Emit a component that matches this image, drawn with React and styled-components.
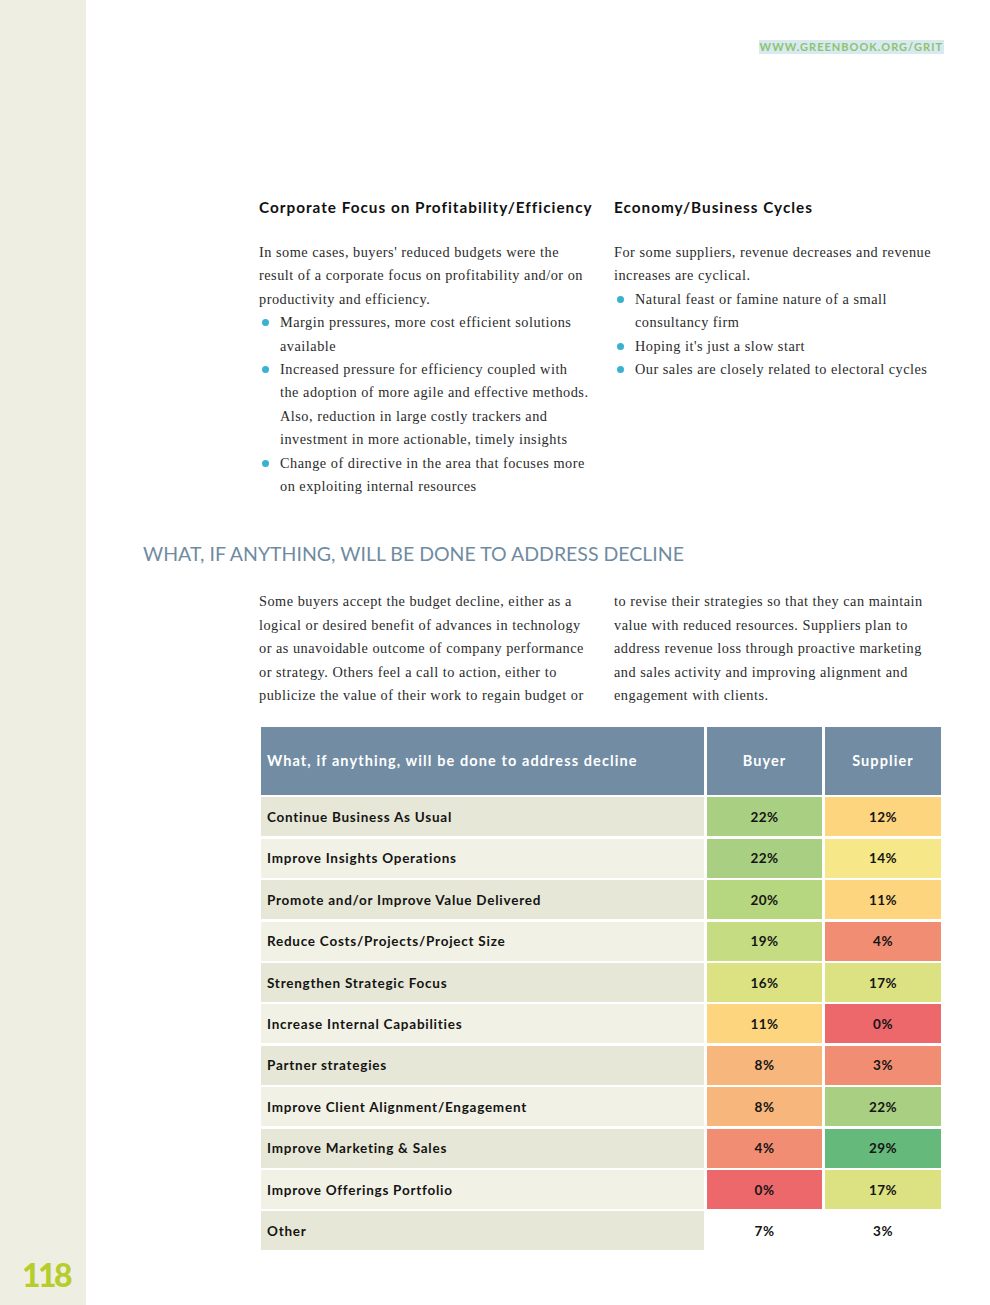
import React from "react";
import styled, { createGlobalStyle } from "styled-components";

const Global = createGlobalStyle`
  html, body { margin: 0; padding: 0; background: #ffffff; }
  body { font-family: "Liberation Serif", serif; }
  * { box-sizing: border-box; }
`;

const Page = styled.div`
  display: flex;
  min-height: 1305px;
  width: 990px;
`;

const Sidebar = styled.aside`
  width: 86px;
  flex: 0 0 86px;
  background: #eeefe2;
  display: flex;
  flex-direction: column;
  justify-content: flex-end;
  align-items: center;
  padding-bottom: 12px;
`;

const PageNumber = styled.div`
  font-family: Lato, "Liberation Sans", sans-serif;
  font-weight: 900;
  font-size: 32px;
  line-height: 36px;
  letter-spacing: -2.5px;
  color: #b7cd2b;
  margin-left: 6px;
`;

const Main = styled.main`
  flex: 1;
  display: flex;
  flex-direction: column;
  padding: 40px 46px 0 0;
`;

const UrlRow = styled.div`
  display: flex;
  justify-content: flex-end;
`;

const Url = styled.span`
  font-family: Lato, "Liberation Sans", sans-serif;
  font-size: 11px;
  line-height: 14px;
  letter-spacing: 1px;
  font-weight: 700;
  color: #8cc46c;
  background: #d9e9f1;
  padding: 0 1px;
`;

const TwoCols = styled.div`
  display: grid;
  grid-template-columns: 335px 330px;
  column-gap: 20px;
  margin-left: 173px;
  margin-top: ${(p) => p.$top || 0}px;
`;

const ColHeading = styled.h3`
  margin: 0 0 24px;
  font-family: Lato, "Liberation Sans", sans-serif;
  font-weight: 700;
  font-size: 15.3px;
  line-height: 20px;
  letter-spacing: 1px;
  color: #111;
  white-space: nowrap;
`;

const Body = styled.p`
  margin: 0;
  font-family: "Liberation Serif", serif;
  font-size: 14.3px;
  line-height: 23.4px;
  letter-spacing: 0.5px;
  color: #2b2b2b;
  white-space: nowrap;
`;

const List = styled.ul`
  list-style: none;
  margin: 0;
  padding: 0;
`;

const Item = styled.li`
  display: flex;
  align-items: flex-start;
  font-family: "Liberation Serif", serif;
  font-size: 14.3px;
  line-height: 23.4px;
  letter-spacing: 0.5px;
  color: #2b2b2b;
  white-space: nowrap;
`;

const Dot = styled.span`
  flex: 0 0 7px;
  width: 7px;
  height: 7px;
  border-radius: 50%;
  background: #38b2cf;
  margin: 8px 11px 0 3px;
`;

const SectionTitle = styled.h2`
  margin: 44px 0 0 57px;
  font-family: Lato, "Liberation Sans", sans-serif;
  font-weight: 400;
  font-size: 19.5px;
  line-height: 24px;
  letter-spacing: 0;
  color: #6f8ba1;
  text-transform: uppercase;
`;

const Table = styled.div`
  margin: 19px 0 0 175px;
  width: 680px;
  display: grid;
  grid-template-columns: 443px 115px 116px;
  column-gap: 3px;
  row-gap: 2.4px;
`;

const HeadCell = styled.div`
  background: #718ca3;
  height: 68px;
  margin-bottom: 0.6px;
  display: flex;
  align-items: center;
  justify-content: ${(p) => (p.$left ? "flex-start" : "center")};
  padding-left: ${(p) => (p.$left ? "6px" : "0")};
  font-family: Lato, "Liberation Sans", sans-serif;
  font-weight: 700;
  font-size: 14.5px;
  letter-spacing: 1.1px;
  color: #ffffff;
`;

const LabelCell = styled.div`
  height: 39px;
  background: ${(p) => (p.$alt ? "#f1f1e6" : "#e6e7d6")};
  display: flex;
  align-items: center;
  padding-left: 6px;
  font-family: Lato, "Liberation Sans", sans-serif;
  font-weight: 700;
  font-size: 13.5px;
  letter-spacing: 0.75px;
  color: #141414;
`;

const ValueCell = styled.div`
  height: 39px;
  background: ${(p) => p.$bg};
  display: flex;
  align-items: center;
  justify-content: center;
  font-family: Lato, "Liberation Sans", sans-serif;
  font-weight: 700;
  font-size: 13.5px;
  letter-spacing: 0.5px;
  color: #141414;
`;

const C = {
  g1: "#a9cf82",
  g2: "#b6d67f",
  g3: "#c5dc82",
  y1: "#dce281",
  y2: "#f6e888",
  o1: "#fdd57f",
  o2: "#f6b67c",
  r1: "#f08d72",
  r2: "#ec686b",
  dg: "#65b97a",
  w: "#ffffff",
};

const rows = [
  ["Continue Business As Usual", "22%", C.g1, "12%", C.o1],
  ["Improve Insights Operations", "22%", C.g1, "14%", C.y2],
  ["Promote and/or Improve Value Delivered", "20%", C.g2, "11%", C.o1],
  ["Reduce Costs/Projects/Project Size", "19%", C.g3, "4%", C.r1],
  ["Strengthen Strategic Focus", "16%", C.y1, "17%", C.y1],
  ["Increase Internal Capabilities", "11%", C.o1, "0%", C.r2],
  ["Partner strategies", "8%", C.o2, "3%", C.r1],
  ["Improve Client Alignment/Engagement", "8%", C.o2, "22%", C.g1],
  ["Improve Marketing & Sales", "4%", C.r1, "29%", C.dg],
  ["Improve Offerings Portfolio", "0%", C.r2, "17%", C.y1],
  ["Other", "7%", C.w, "3%", C.w],
];

export default function App() {
  return (
    <>
      <Global />
      <Page>
        <Sidebar>
          <PageNumber>118</PageNumber>
        </Sidebar>
        <Main>
          <UrlRow>
            <Url>WWW.GREENBOOK.ORG/GRIT</Url>
          </UrlRow>

          <TwoCols $top={143}>
            <div>
              <ColHeading>Corporate Focus on Profitability/Efficiency</ColHeading>
              <Body>
                In some cases, buyers' reduced budgets were the
                <br />
                result of a corporate focus on profitability and/or on
                <br />
                productivity and efficiency.
              </Body>
              <List>
                <Item>
                  <Dot />
                  <span>
                    Margin pressures, more cost efficient solutions
                    <br />
                    available
                  </span>
                </Item>
                <Item>
                  <Dot />
                  <span>
                    Increased pressure for efficiency coupled with
                    <br />
                    the adoption of more agile and effective methods.
                    <br />
                    Also, reduction in large costly trackers and
                    <br />
                    investment in more actionable, timely insights
                  </span>
                </Item>
                <Item>
                  <Dot />
                  <span>
                    Change of directive in the area that focuses more
                    <br />
                    on exploiting internal resources
                  </span>
                </Item>
              </List>
            </div>
            <div>
              <ColHeading>Economy/Business Cycles</ColHeading>
              <Body>
                For some suppliers, revenue decreases and revenue
                <br />
                increases are cyclical.
              </Body>
              <List>
                <Item>
                  <Dot />
                  <span>
                    Natural feast or famine nature of a small
                    <br />
                    consultancy firm
                  </span>
                </Item>
                <Item>
                  <Dot />
                  <span>Hoping it's just a slow start</span>
                </Item>
                <Item>
                  <Dot />
                  <span>Our sales are closely related to electoral cycles</span>
                </Item>
              </List>
            </div>
          </TwoCols>

          <SectionTitle>What, if anything, will be done to address decline</SectionTitle>

          <TwoCols $top={24}>
            <Body>
              Some buyers accept the budget decline, either as a
              <br />
              logical or desired benefit of advances in technology
              <br />
              or as unavoidable outcome of company performance
              <br />
              or strategy. Others feel a call to action, either to
              <br />
              publicize the value of their work to regain budget or
            </Body>
            <Body>
              to revise their strategies so that they can maintain
              <br />
              value with reduced resources. Suppliers plan to
              <br />
              address revenue loss through proactive marketing
              <br />
              and sales activity and improving alignment and
              <br />
              engagement with clients.
            </Body>
          </TwoCols>

          <Table>
            <HeadCell $left>What, if anything, will be done to address decline</HeadCell>
            <HeadCell>Buyer</HeadCell>
            <HeadCell>Supplier</HeadCell>
            {rows.map(([label, b, bc, s, sc], i) => (
              <React.Fragment key={label}>
                <LabelCell $alt={i % 2 === 1}>{label}</LabelCell>
                <ValueCell $bg={bc}>{b}</ValueCell>
                <ValueCell $bg={sc}>{s}</ValueCell>
              </React.Fragment>
            ))}
          </Table>
        </Main>
      </Page>
    </>
  );
}
